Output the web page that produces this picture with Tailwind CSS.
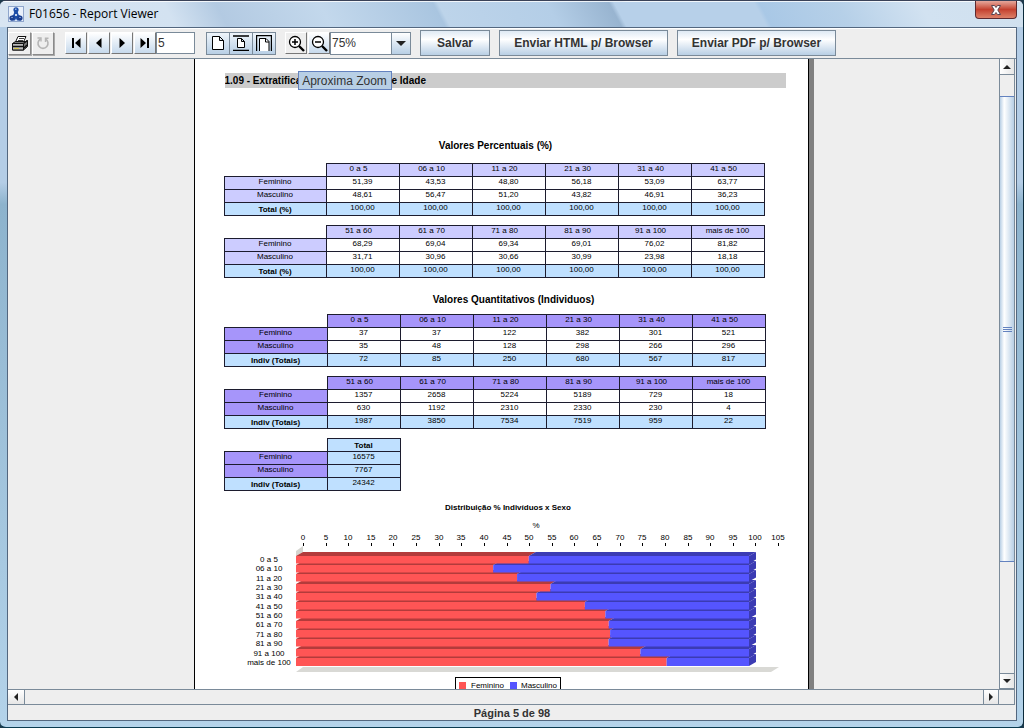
<!DOCTYPE html>
<html lang="pt-BR">
<head>
<meta charset="utf-8">
<title>F01656 - Report Viewer</title>
<script src="https://cdn.jsdelivr.net/npm/@tailwindcss/browser@4"></script>
</head>
<body class="h-screen overflow-hidden bg-[#1d3a4c] font-['Liberation_Sans',Arial,sans-serif] text-xs text-[#333]">
<div class="flex h-full flex-col border-t border-r border-b border-t-[#3a4258] border-r-[#0b2a3a] border-b-[#0a3a50] rounded-t-md rounded-b-md overflow-hidden bg-linear-to-b from-[#b4cde6] from-25% via-[#8db3cd] via-28% to-[#b4d3ea]">
  <header class="flex h-[26px] shrink-0 items-start border-t border-white/80 bg-[linear-gradient(62deg,#d8e5f2_0%,#d3e2f1_17%,#b3cae2_22%,#c3d8ec_32%,#a9c5e0_43%,#bdd4ea_43.5%,#b4cee7_54%,#98b4d0_60%,#b7d0e9_60.5%,#b7d0e9_74%,#a9c8e6_74.5%,#b6d0e8_82%,#d2e2f1_90%,#d0e0ee_100%)] pl-2 pr-[6px]">
    <svg class="mt-[4px] h-4 w-4 shrink-0" viewBox="0 0 16 16"><rect x=".5" y=".5" width="15" height="15" fill="#e8f0fb" stroke="#8fa6cc"/><circle cx="8" cy="3.800" r="2.600" fill="#1c4da8"/><path d="M6.500 5h3l1 3.500 3.500 3L13 14.500H9l-1-2-1 2H3l-1-3 3.500-3z" fill="#1c4da8"/><circle cx="4" cy="12" r="2.600" fill="#1a3f90"/><circle cx="12" cy="12" r="2.600" fill="#1a3f90"/><circle cx="8" cy="9" r="1" fill="#fff"/><path d="M7 3.200h1.500M3.500 11.500h1M11.500 11.500h1" stroke="#cfe0ff"/></svg>
    <h1 class="mt-[3px] ml-[5px] flex-1 font-['Open_Sans','Noto_Sans',sans-serif] text-xs leading-[18px] text-black">F01656 - Report Viewer</h1>
    <button aria-label="Fechar" class="-mt-px flex h-[18px] w-[42px] items-center justify-center rounded-b border border-t-0 border-[#5d2a30] bg-linear-to-b from-[#e5a79c] from-0% via-[#c4402f] via-50% to-[#dd8068]">
      <svg class="h-3 w-3" viewBox="0 0 12 12"><path d="M1.500 1.500h3L6 3.500l1.500-2h3L7.800 6l2.700 4.500h-3L6 8.500l-1.500 2h-3L4.200 6z" fill="#fff" stroke="#5a4450"/></svg>
    </button>
  </header>

  <div class="mr-[6px] mb-[6px] ml-[7px] flex min-h-0 flex-1 flex-col border border-[#53677f] bg-[#eee]">
    <div class="flex h-[31px] shrink-0 items-center border-b border-[#7a8a99] border-t border-t-white pb-px">
      <button aria-label="Imprimir" class="flex h-[23px] w-[23px] items-center justify-center border border-t-white border-l-white border-r-[#8a8a8a] border-b-[#8a8a8a] shadow-[1px_1px_0_#aaa]">
        <svg class="h-[18px] w-[18px]" viewBox="0 0 18 18" fill="#fff" stroke="#111"><path d="M4.500 8L7 2.500h8L12.500 8"/><path d="M8 4.500h5M7 6.500h5" stroke-width=".8"/><path d="M1.500 9.500l3-2h10l2-1v6l-4 3.500h-11z" fill="#777"/><path d="M1.500 9.500h11v6.500h-11z" fill="#bbb"/><path d="M2 12.500h10M12.500 9.500l4-3M13 14l3-3" stroke-width="1.500"/><path d="M3 14.500h5" stroke="#d9c94a"/></svg>
      </button>
      <button aria-label="Recarregar" disabled class="ml-px flex h-[23px] w-[22px] items-center justify-center border border-t-white border-l-white border-r-[#8a8a8a] border-b-[#8a8a8a] shadow-[1px_1px_0_#aaa]">
        <svg class="h-4 w-4" viewBox="0 0 16 16" fill="none" stroke="#b5b5b5" stroke-width="1.600"><path d="M5.500 4A5 5 0 1 0 10.500 4"/><path d="M2.500 3h3.500v3.500M10.500 7V3.200h3" stroke-width="1.400"/></svg>
      </button>
      <div class="ml-[11px] flex items-center gap-px">
        <button aria-label="Primeira página" class="flex h-[22px] w-[22px] items-center justify-center border border-t-white border-l-white border-r-[#777] border-b-[#777] bg-linear-to-b from-white to-[#c6d9ec]"><svg class="h-[10px] w-[10px]" viewBox="0 0 10 10"><path d="M1 0h2v10H1zM9.500 0v10L4 5z"/></svg></button>
        <button aria-label="Página anterior" class="flex h-[22px] w-[22px] items-center justify-center border border-t-white border-l-white border-r-[#777] border-b-[#777] bg-linear-to-b from-white to-[#c6d9ec]"><svg class="h-[10px] w-[10px]" viewBox="0 0 10 10"><path d="M7.500 0v10L2 5z"/></svg></button>
        <button aria-label="Próxima página" class="flex h-[22px] w-[22px] items-center justify-center border border-t-white border-l-white border-r-[#777] border-b-[#777] bg-linear-to-b from-white to-[#c6d9ec]"><svg class="h-[10px] w-[10px]" viewBox="0 0 10 10"><path d="M2.500 0v10L8 5z"/></svg></button>
        <button aria-label="Última página" class="flex h-[22px] w-[22px] items-center justify-center border border-t-white border-l-white border-r-[#777] border-b-[#777] bg-linear-to-b from-white to-[#c6d9ec]"><svg class="h-[10px] w-[10px]" viewBox="0 0 10 10"><path d="M7 0h2v10H7zM.500 0v10L6 5z"/></svg></button>
      </div>
      <input aria-label="Página" value="5" class="h-[22px] w-[39px] border border-[#7a8a99] bg-white pl-px text-xs">
      <div class="ml-[11px] flex">
        <button aria-label="Tamanho real" class="flex h-[23px] w-[24px] items-center justify-center border border-[#7a8a99] bg-linear-to-b from-[#eef4fa] to-[#b8cfe5]"><svg class="h-[14px] w-[12px]" viewBox="0 0 12 14" fill="#fff" stroke="#000"><path d="M.5.5h7l4 4v9H.5zM7.500.5v4h4"/></svg></button>
        <button aria-label="Página inteira" class="-ml-px flex h-[23px] w-[24px] items-center justify-center border border-[#7a8a99] bg-linear-to-b from-[#eef4fa] to-[#b8cfe5]"><svg class="h-4 w-4" viewBox="0 0 16 16" fill="#fff" stroke="#000"><path d="M0 1h16M0 15.300h16" stroke-width="1.300"/><path d="M4.500 3.500h4l3 3v6h-7zM8.500 3.500v3h3"/></svg></button>
        <button aria-label="Largura da página" class="-ml-px flex h-[23px] w-[24px] items-center justify-center border border-[#7a8a99] bg-linear-to-b from-[#eef4fa] to-[#b8cfe5]"><svg class="h-4 w-4" viewBox="0 0 16 16" fill="none" stroke="#000"><path d="M.6 16V.6h14.800V16" stroke-width="1.200"/><path d="M3.500 16V3.500h6.500l3 3V16" fill="#fff"/><path d="M9.500 3.500v3.500H13"/></svg></button>
      </div>
      <div class="ml-[9px] flex gap-px">
        <button aria-label="Aproxima Zoom" class="flex h-[22px] w-[22px] items-center justify-center border border-t-white border-l-white border-r-[#777] border-b-[#777]"><svg class="h-[17px] w-[17px]" viewBox="0 0 17 17" fill="none" stroke="#000"><circle cx="7" cy="7" r="5.500" fill="#fff" stroke-width="1.300"/><path d="M4 7h6M7 4v6" stroke-width="1.500"/><path d="M11 11l5 5" stroke-width="2.400"/></svg></button>
        <button aria-label="Afasta Zoom" class="flex h-[22px] w-[22px] items-center justify-center border border-t-white border-l-white border-r-[#777] border-b-[#777] bg-linear-to-b from-white to-[#c6d9ec]"><svg class="h-[17px] w-[17px]" viewBox="0 0 17 17" fill="none" stroke="#000"><circle cx="7" cy="7" r="5.500" fill="#fff" stroke-width="1.300"/><path d="M4 7h6" stroke-width="1.500"/><path d="M11 11l5 5" stroke-width="2.400"/></svg></button>
      </div>
      <div class="relative h-[23px] w-[81px]">
        <select aria-label="Zoom" class="h-full w-full appearance-none border border-[#7a8a99] bg-white pl-px text-xs"><option>75%</option></select>
        <span class="pointer-events-none absolute inset-y-0 right-0 flex w-[20px] items-center justify-center border border-[#7a8a99] bg-linear-to-b from-white to-[#b8cfe5]"><svg class="h-[5px] w-[10px]" viewBox="0 0 10 5"><path d="M0 0h10L5 5z" fill="#222"/></svg></span>
      </div>
      <div class="ml-[9px] flex gap-[9px] text-xs font-bold">
        <button class="h-[26px] w-[70px] border border-[#7a8a99] bg-linear-to-b from-[#dfeaf4] via-white via-35% to-[#b8cfe5]">Salvar</button>
        <button class="h-[26px] w-[169px] border border-[#7a8a99] bg-linear-to-b from-[#dfeaf4] via-white via-35% to-[#b8cfe5]">Enviar HTML p/ Browser</button>
        <button class="h-[26px] w-[159px] border border-[#7a8a99] bg-linear-to-b from-[#dfeaf4] via-white via-35% to-[#b8cfe5]">Enviar PDF p/ Browser</button>
      </div>
    </div>

    <div class="mr-px flex min-h-0 flex-1">
      <main class="flex min-w-0 flex-1 justify-center overflow-hidden">
        <article class="w-[620px] shrink-0 self-start border-l border-black border-r-[5px] border-r-[#808080] bg-white text-[8px] leading-3 text-black">
          <div class="border-r border-black pt-[14px] pl-[29px]">
            <div class="ml-px flex h-[15px] w-[561px] items-center bg-[#ccc]">
              <h2 class="flex items-center text-[10px] leading-[15px] font-bold">
                <span class="w-[73px] overflow-hidden whitespace-nowrap">1.09 - Extratifica</span>
                <span role="tooltip" class="h-[19px] w-[94px] border border-[#6382bf] bg-[#b8cfe5] text-center text-xs leading-[18px] font-normal whitespace-nowrap text-[#333]">Aproxima Zoom</span>
                <span>e Idade</span>
              </h2>
            </div>
            <h3 class="mt-[50px] w-[544px] text-center text-[10px] leading-[15px] font-bold">Valores Percentuais (%)</h3>
            <div id="percent" class="mt-[10px] flex flex-col gap-[9px]"></div>
            <h3 class="mt-[14px] w-[580px] text-center text-[10px] leading-[15px] font-bold">Valores Quantitativos (Individuos)</h3>
            <div id="count" class="mt-[7px] flex flex-col gap-[9px]"></div>
            <svg id="chart" class="mt-2 block h-[220px] w-[570px]" viewBox="224 499 570 220" font-size="8" role="img" aria-label="Distribuição % Indivíduos x Sexo">
              <text x="508" y="510" text-anchor="middle" font-weight="bold">Distribuição % Indivíduos x Sexo</text>
              <text x="536" y="528" text-anchor="middle">%</text>
              <path d="M296 551l7-5v6l-7 4z" fill="#d5d5d0"/>
              <path d="M296 672l7-5h476l-8 5z" fill="#d9d9d5"/>
              <g id="axis"></g>
              <g id="bars"></g>
              <rect x="455.500" y="677.500" width="105" height="15" fill="#fff" stroke="#000"/>
              <rect x="459" y="682" width="7" height="7" fill="#ff5555"/>
              <text x="471" y="688">Feminino</text>
              <rect x="510" y="682" width="7" height="7" fill="#5555ff"/>
              <text x="521" y="688">Masculino</text>
            </svg>
          </div>
        </article>
      </main>
      <div class="flex w-4 shrink-0 flex-col border-x border-[#7a8a99] bg-[#eee]">
        <button aria-label="Rolar para cima" class="flex h-4 items-center justify-center border-b border-[#7a8a99] bg-linear-to-r from-white to-[#e6e6e6]"><svg class="h-1 w-2" viewBox="0 0 8 4"><path d="M0 4h8L4 0z" fill="#222"/></svg></button>
        <div class="flex min-h-0 flex-1 flex-col">
          <div class="flex-[21]"></div>
          <div class="flex flex-[465] flex-col items-center justify-center gap-px border-y border-[#6382bf] bg-linear-to-r from-[#b8cfe5] via-white via-30% to-[#b8cfe5]">
            <i class="h-px w-[9px] bg-[#6382bf]"></i><i class="h-px w-[9px] bg-[#6382bf]"></i><i class="h-px w-[9px] bg-[#6382bf]"></i>
          </div>
          <div class="flex-[111]"></div>
        </div>
        <button aria-label="Rolar para baixo" class="flex h-4 items-center justify-center border-y border-[#7a8a99] bg-linear-to-r from-white to-[#e6e6e6]"><svg class="h-1 w-2" viewBox="0 0 8 4"><path d="M0 0h8L4 4z" fill="#222"/></svg></button>
      </div>
    </div>
    <div class="mr-px flex h-4 shrink-0 border-y border-r border-[#7a8a99]">
      <button aria-label="Rolar para a esquerda" class="flex w-[17px] items-center justify-center border-r border-[#7a8a99] bg-linear-to-b from-white to-[#e6e6e6]"><svg class="h-2 w-1" viewBox="0 0 4 8"><path d="M4 0v8L0 4z" fill="#222"/></svg></button>
      <div class="flex-1"></div>
      <button aria-label="Rolar para a direita" class="mr-[15px] flex w-4 items-center justify-center border-x border-[#7a8a99] bg-linear-to-b from-white to-[#e6e6e6]"><svg class="h-2 w-1" viewBox="0 0 4 8"><path d="M0 0v8l4-4z" fill="#222"/></svg></button>
    </div>
    <footer class="h-[15px] shrink-0 text-center text-[11px] leading-[17px] font-bold">Página 5 de 98</footer>
  </div>
</div>

<script>
const ages = ['0 a 5','06 a 10','11 a 20','21 a 30','31 a 40','41 a 50','51 a 60','61 a 70','71 a 80','81 a 90','91 a 100','mais de 100'];
const fem = ['51,39','43,53','48,80','56,18','53,09','63,77','68,29','69,04','69,34','69,01','76,02','81,82'];
const masc = ['48,61','56,47','51,20','43,82','46,91','36,23','31,71','30,96','30,66','30,99','23,98','18,18'];
const femN = [37,37,122,382,301,521,1357,2658,5224,5189,729,18];
const mascN = [35,48,128,298,266,296,630,1192,2310,2330,230,4];
const totN = [72,85,250,680,567,817,1987,3850,7534,7519,959,22];
const lilac = 'bg-[#ccccff]', violet = 'bg-[#a695fa]', sky = 'bg-[#bfe0ff]';

function table(head, rows, tone, wide, total) {
  const cell = 'h-[13px] border border-[#1c1c2e] p-0 align-middle leading-[10px] ';
  const first = wide ? 'w-[103px]' : 'w-[102px]';
  const headCell = h => total ? 'font-bold pt-0.5 ' + sky : 'font-normal pb-0.5 ' + (h.startsWith('mais') ? '' : 'pr-2 ') + tone;
  return `<table class="table-fixed border-collapse text-center self-start ${head.length > 1 ? (wide ? 'w-[542px]' : 'w-[541px]') : 'w-[177px]'}">
    <colgroup><col class="${first}">${'<col class="w-[73px]">'.repeat(head.length)}</colgroup>
    <thead><tr><td class="h-[13px] p-0"></td>${head.map(h => `<th scope="col" class="${cell} ${headCell(h)}">${h}</th>`).join('')}</tr></thead>
    <tbody>${rows.map((r, i) => `<tr><th scope="row" class="${cell} ${i == 2 ? 'font-bold pt-0.5 ' + sky : 'font-normal pb-0.5 ' + tone}">${r[0]}</th>${r[1].map(v => `<td class="${cell} pb-0.5 ${i == 2 || total ? sky : ''}">${v}</td>`).join('')}</tr>`).join('')}</tbody></table>`;
}
const part = (a, n) => a.slice(n * 6, n * 6 + 6);
document.getElementById('percent').innerHTML = [0, 1].map(n => table(part(ages, n), [['Feminino', part(fem, n)], ['Masculino', part(masc, n)], ['Total (%)', Array(6).fill('100,00')]], lilac, false, false)).join('');
document.getElementById('count').innerHTML = [0, 1].map(n => table(part(ages, n), [['Feminino', part(femN, n)], ['Masculino', part(mascN, n)], ['Indiv (Totais)', part(totN, n)]], violet, true, false)).join('')
  + table(['Total'], [['Feminino', [16575]], ['Masculino', [7767]], ['Indiv (Totais)', [24342]]], violet, true, true);

let axis = '', bars = '';
for (let v = 0; v <= 105; v += 5) {
  const x = Math.round(303 + v * 4.524);
  axis += `<text x="${x}" y="540" text-anchor="middle">${v}</text><path d="M${x + .5} 543v3" stroke="#000"/>`;
}
// Bars are painted from the bottom row up so each front face covers the top of the row below.
for (let i = 11; i >= 0; i--) {
  const t = Math.round(555.6 + i * 9.3), b = t + (i == 11 ? 8 : 7.6), m = 296 + parseFloat(fem[i].replace(',', '.')) * 4.53, e = 749;
  bars += `<path d="M296 ${t}l7-4H${m + 7}l-7 4z" fill="#b33b3b"/><path d="M${m} ${t}l7-4H${e + 7}l-7 4z" fill="#3b3bb3"/>`
    + `<path d="M${e} ${t}l7-4V${b - 4}l-7 4z" fill="#3b3bb3"/>`
    + `<path d="M296 ${t}H${m}V${b}H296z" fill="#ff5555"/><path d="M${m} ${t}H${e}V${b}H${m}z" fill="#5555ff"/>`
    + `<text x="269" y="${562 + i * 9.35}" text-anchor="middle">${ages[i]}</text>`;
}
document.getElementById('axis').innerHTML = axis;
document.getElementById('bars').innerHTML = bars;
</script>
</body>
</html>
